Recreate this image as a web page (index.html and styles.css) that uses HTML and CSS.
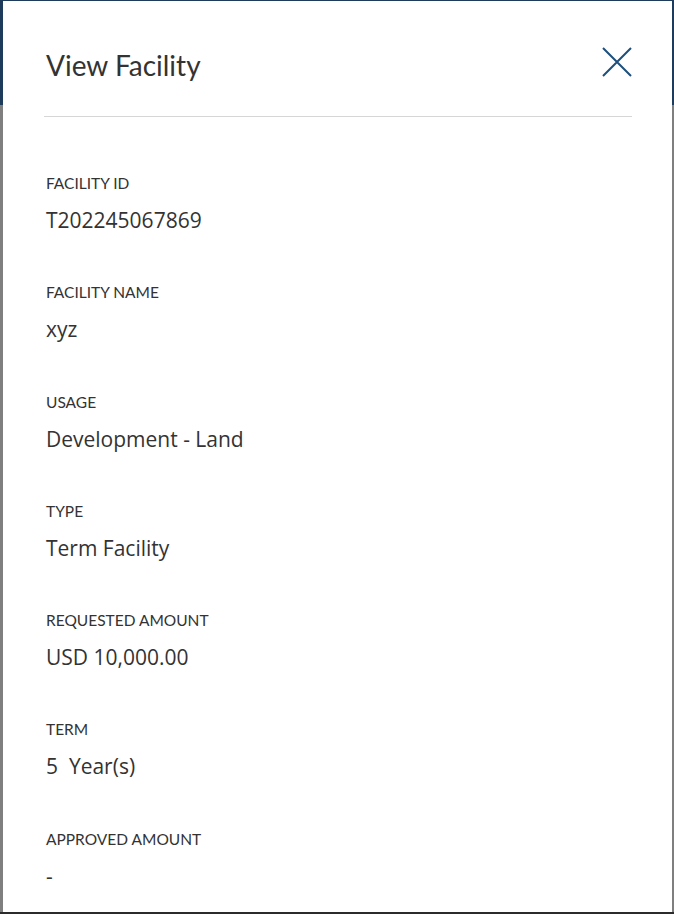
FILE: index.html
```html
<!DOCTYPE html>
<html lang="en">
<head>
    <meta charset="UTF-8">
    <title>View Facility</title>
    <link rel="stylesheet" href="styles.css">
</head>
<body>
    <div class="modal">
        <div class="modal-header">
            <h2>View Facility</h2>
            <button class="close-btn" aria-label="Close">
                <svg width="30" height="30" viewBox="0 0 30 30">
                    <path d="M1 1 L29 29 M29 1 L1 29" stroke="#1d4e7c" stroke-width="2" fill="none"/>
                </svg>
            </button>
        </div>

        <div class="modal-body">
            <div class="field">
                <div class="field-label">Facility ID</div>
                <div class="field-value">T202245067869</div>
            </div>
            <div class="field">
                <div class="field-label">Facility Name</div>
                <div class="field-value">xyz</div>
            </div>
            <div class="field">
                <div class="field-label">Usage</div>
                <div class="field-value">Development - Land</div>
            </div>
            <div class="field">
                <div class="field-label">Type</div>
                <div class="field-value">Term Facility</div>
            </div>
            <div class="field">
                <div class="field-label">Requested Amount</div>
                <div class="field-value">USD 10,000.00</div>
            </div>
            <div class="field">
                <div class="field-label">Term</div>
                <div class="field-value">5&nbsp; Year(s)</div>
            </div>
            <div class="field">
                <div class="field-label">Approved Amount</div>
                <div class="field-value">-</div>
            </div>
        </div>
    </div>
</body>
</html>
```

FILE: styles.css
```css
html, body {
    height: 914px;
}

body {
    margin: 0;
    font-family: 'Lato', sans-serif;
    color: #333;
    overflow: hidden;
    background: linear-gradient(to bottom, #1f3b5c 0 105px, #7f7f7f 105px 912px, #2b2b2b 912px);
}

.modal {
    box-sizing: border-box;
    height: 911px;
    margin: 1px 2px 0 3px;
    padding: 0 40px 0 41px;
    background: #fff;
    overflow: hidden;
}

.modal-header {
    display: flex;
    justify-content: space-between;
    align-items: flex-start;
    padding: 46px 0 33px;
    border-bottom: 1px solid #d6d6d6;
}

.modal-header h2 {
    margin: 0;
    padding-left: 2px;
    font-size: 28px;
    font-weight: 400;
    line-height: 36px;
    color: #333;
}

.close-btn {
    width: 30px;
    height: 30px;
    padding: 0;
    border: 0;
    background: none;
    cursor: pointer;
}

    .close-btn svg {
        display: block;
    }

.modal-body {
    padding-top: 56px;
}

.field {
    display: flex;
    flex-direction: column;
    gap: 13px;
    margin-bottom: 48.3px;
    padding-left: 2px;
}

.field-label {
    font-size: 15.5px;
    line-height: 20px;
    text-transform: uppercase;
    color: #333;
}

.field-value {
    font-family: 'Open Sans', sans-serif;
    font-size: 21px;
    line-height: 28px;
    color: #333;
}
```
